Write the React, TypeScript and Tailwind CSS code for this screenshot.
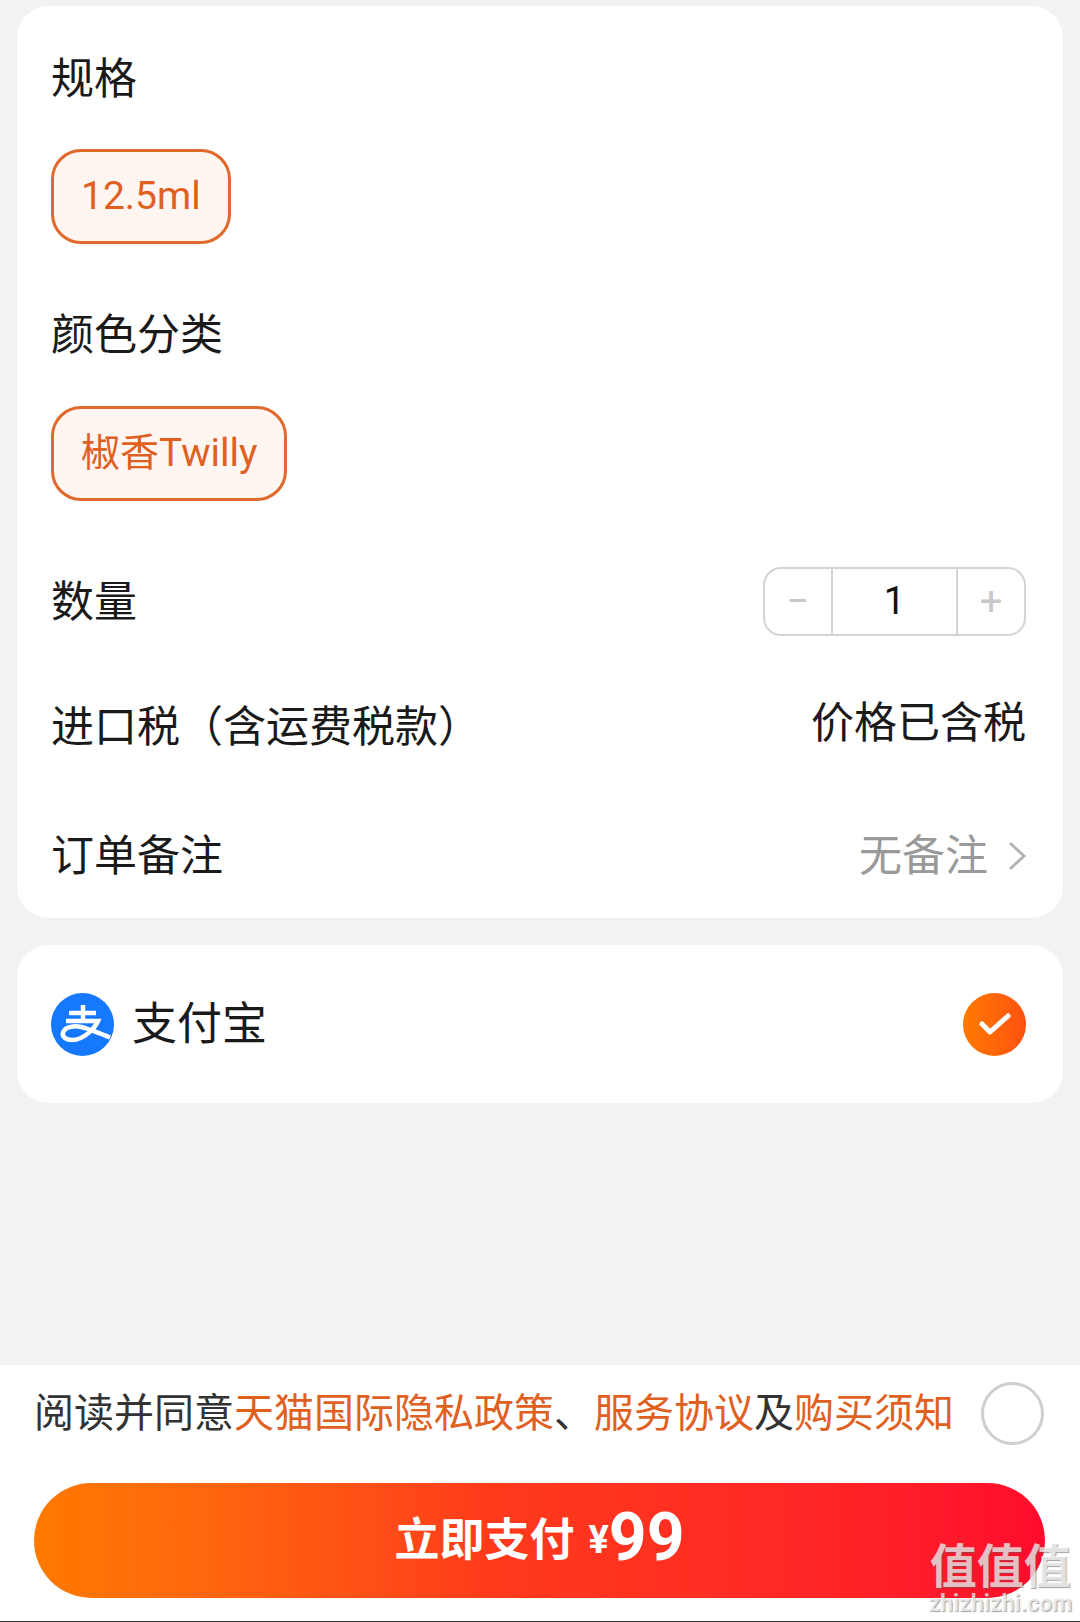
const font = { fontFamily: '"Roboto", "Noto Sans CJK SC", sans-serif' };

const Chip = ({ text }: { text: string }) => (
    <div className="w-fit h-[95px] px-[27px] flex items-center rounded-[30px] border-[3px] border-[#df6a2c] bg-[#fff6f2] text-[39px] text-[#e0601f]">
        {text}
    </div>
);

const AlipayLogo = () => (
    <svg width="63" height="63" viewBox="0 0 63 63">
        <circle cx="31.5" cy="31.5" r="31.5" fill="#1677ff" />
        <g fill="none" stroke="#fff" strokeWidth="4.5">
            <path d="M18 20H45" />
            <path d="M32 12V28" />
            <path d="M15 28H47C44 35 33 47 21 47C14 47 11 43 12 39.5C14 33 25 32 34 35C42 38 51 41 59 44.5" />
        </g>
    </svg>
);

const App = () => {
    return (
        <div style={font} className="relative w-[1080px] h-[1622px] flex flex-col bg-[#f2f2f2] text-[#1a1a1a] overflow-hidden">
            <div className="mt-[6px] mx-[17px] pl-[34px] pr-[37px] pt-[49px] pb-[38px] bg-white rounded-[32px]">
                <div className="text-[43px] leading-[48px]">规格</div>
                <div className="mt-[46px]">
                    <Chip text="12.5ml" />
                </div>
                <div className="mt-[67px] text-[43px] leading-[48px]">颜色分类</div>
                <div className="mt-[47px]">
                    <Chip text="椒香Twilly" />
                </div>
                <div className="mt-[66px] flex justify-between items-center">
                    <span className="text-[43px] leading-[48px]">数量</span>
                    <div className="flex w-[263px] h-[69px] rounded-[18px] border-2 border-[#d4d4d4]">
                        <div className="w-[66px] flex items-center justify-center text-[40px] text-[#c8c8c8]">−</div>
                        <div className="flex-1 flex items-center justify-center border-x-2 border-[#d4d4d4] text-[38px] text-[#111]">1</div>
                        <div className="w-[66px] flex items-center justify-center text-[40px] text-[#c8c8c8]">+</div>
                    </div>
                </div>
                <div className="mt-[67px] flex justify-between items-start">
                    <span className="text-[43px] leading-[48px]">进口税（含运费税款）</span>
                    <span className="text-[43px] leading-[40px]">价格已含税</span>
                </div>
                <div className="mt-[81px] flex justify-between items-center">
                    <span className="text-[43px] leading-[48px]">订单备注</span>
                    <div className="flex items-center gap-[20px] text-[#999]">
                        <span className="text-[43px] leading-[48px]">无备注</span>
                        <svg width="18" height="30" viewBox="0 0 18 30" fill="none" stroke="#b4b4b4" strokeWidth="3">
                            <path d="M2 2L16 15L2 28" />
                        </svg>
                    </div>
                </div>
            </div>

            <div className="mt-[27px] mx-[17px] h-[158px] pl-[34px] pr-[37px] flex items-center justify-between bg-white rounded-[32px]">
                <div className="flex items-center gap-[18px]">
                    <AlipayLogo />
                    <span className="text-[45px] pt-[2px]">支付宝</span>
                </div>
                <div className="w-[63px] h-[63px] rounded-full bg-gradient-to-r from-[#ff7a00] to-[#ff5010] flex items-center justify-center">
                    <svg width="34" height="26" viewBox="0 0 34 26" fill="none" stroke="#fff" strokeWidth="5" strokeLinecap="round" strokeLinejoin="round">
                        <path d="M4 13L12 21L30 5" />
                    </svg>
                </div>
            </div>

            <div className="mt-auto h-[257px] bg-white border-b border-[#333]">
                <div className="pt-[17px] pl-[34px] pr-[36px] flex items-center justify-between">
                    <p className="text-[40px] leading-[48px] whitespace-nowrap text-[#333]">
                        阅读并同意<span className="text-[#e0601f]">天猫国际隐私政策</span>、<span className="text-[#e0601f]">服务协议</span>及<span className="text-[#e0601f]">购买须知</span>
                    </p>
                    <div className="w-[63px] h-[63px] rounded-full border-[3px] border-[#cfcfcf]" />
                </div>
                <div className="mt-[38px] ml-[34px] mr-[35px] h-[115px] rounded-full bg-gradient-to-r from-[#ff7a00] via-[#ff3a1a] via-45% to-[#ff0a2c] flex items-center justify-center text-white font-bold">
                    <span className="text-[45px]">立即支付</span>
                    <span className="ml-[14px] text-[38px]">¥</span>
                    <span className="text-[66px] leading-none -mt-[6px]">99</span>
                </div>
            </div>

            <div className="absolute right-[8px] bottom-[6px] flex flex-col items-center text-white/70 [text-shadow:1px_1px_1px_rgba(90,90,90,0.55)]">
                <span className="text-[47px] leading-[50px] font-bold">值值值</span>
                <span className="text-[23px] leading-[24px] font-bold">zhizhizhi.com</span>
            </div>
        </div>
    );
};

export default App;
